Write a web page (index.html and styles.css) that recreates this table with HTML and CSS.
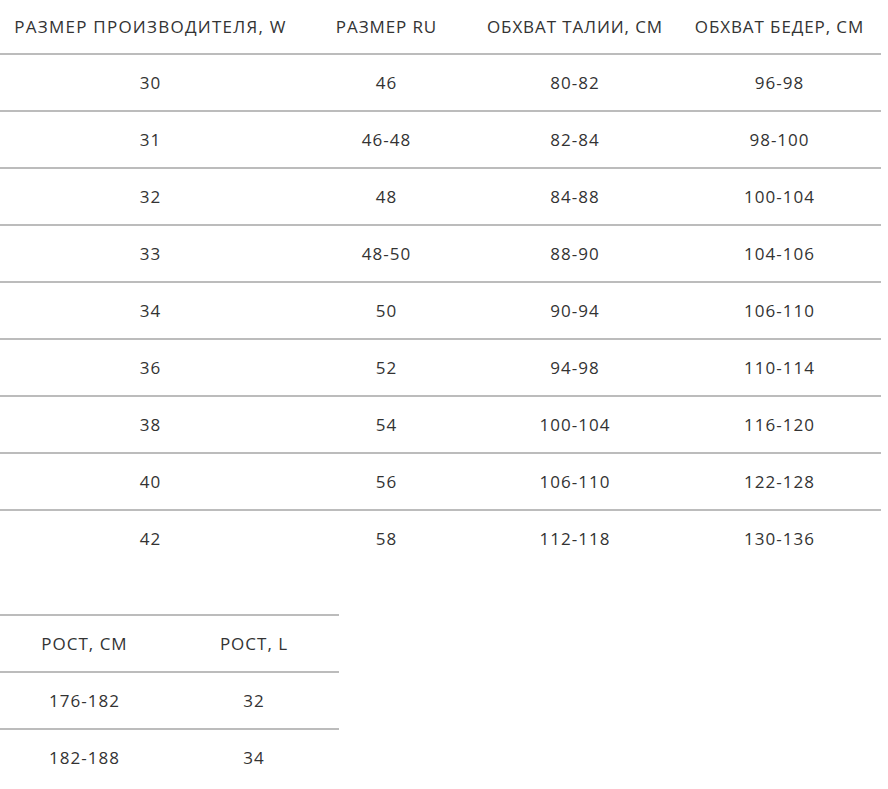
FILE: index.html
```html
<!DOCTYPE html>
<html lang="ru">
<head>
<meta charset="utf-8">
<title>Таблица размеров</title>
<link rel="stylesheet" href="styles.css">
</head>
<body>
<table class="sizes sizes-main">
  <colgroup>
    <col class="c1"><col class="c2"><col class="c3"><col class="c4">
  </colgroup>
  <thead>
    <tr><th class="wide">РАЗМЕР ПРОИЗВОДИТЕЛЯ, W</th><th>РАЗМЕР RU</th><th>ОБХВАТ ТАЛИИ, СМ</th><th>ОБХВАТ БЕДЕР, СМ</th></tr>
  </thead>
  <tbody>
    <tr><td>30</td><td>46</td><td>80-82</td><td>96-98</td></tr>
    <tr><td>31</td><td>46-48</td><td>82-84</td><td>98-100</td></tr>
    <tr><td>32</td><td>48</td><td>84-88</td><td>100-104</td></tr>
    <tr><td>33</td><td>48-50</td><td>88-90</td><td>104-106</td></tr>
    <tr><td>34</td><td>50</td><td>90-94</td><td>106-110</td></tr>
    <tr><td>36</td><td>52</td><td>94-98</td><td>110-114</td></tr>
    <tr><td>38</td><td>54</td><td>100-104</td><td>116-120</td></tr>
    <tr><td>40</td><td>56</td><td>106-110</td><td>122-128</td></tr>
    <tr><td>42</td><td>58</td><td>112-118</td><td>130-136</td></tr>
  </tbody>
</table>

<table class="sizes sizes-height">
  <colgroup>
    <col class="h1"><col class="h2">
  </colgroup>
  <tbody>
    <tr><td>РОСТ, СМ</td><td>РОСТ, L</td></tr>
    <tr><td>176-182</td><td>32</td></tr>
    <tr><td>182-188</td><td>34</td></tr>
  </tbody>
</table>
</body>
</html>
```

FILE: styles.css
```css
html, body {
  margin: 0;
  padding: 0;
  background: #ffffff;
}

body {
  font-family: "Open Sans", "Noto Sans", sans-serif;
  font-size: 17px;
  letter-spacing: 1px;
  color: #333333;
}

.sizes {
  border-collapse: separate;
  border-spacing: 0;
  table-layout: fixed;
}

.sizes th,
.sizes td {
  padding: 0 2px;
  text-align: center;
  font-weight: 400;
  white-space: nowrap;
}

.sizes-main {
  width: 881px;
}

.sizes-main .c1 { width: 301px; }
.sizes-main .c2 { width: 171px; }
.sizes-main .c3 { width: 206px; }
.sizes-main .c4 { width: 203px; }

.sizes-main th {
  height: 53px;
  line-height: 53px;
  letter-spacing: 0.9px;
}

.sizes-main th.wide {
  letter-spacing: 1.25px;
}

.sizes-main td {
  height: 55px;
  line-height: 55px;
  border-top: 2px solid #bcbcbc;
}

.sizes-height {
  width: 339px;
  margin-top: 48px;
}

.sizes-height .h1 { width: 169px; }
.sizes-height .h2 { width: 170px; }

.sizes-height td {
  height: 55px;
  line-height: 55px;
  border-top: 2px solid #bcbcbc;
}
```
